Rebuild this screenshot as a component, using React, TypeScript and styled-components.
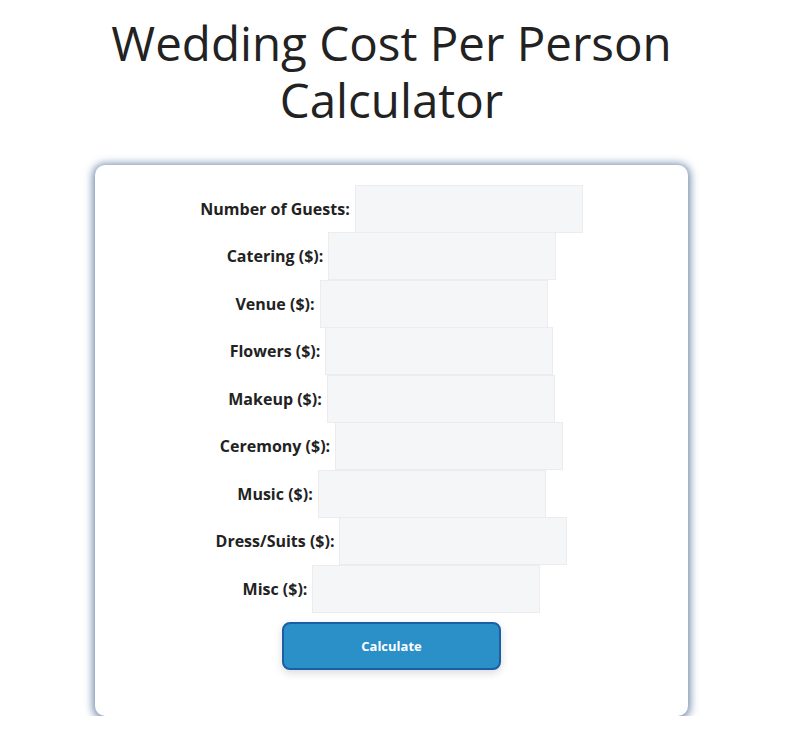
import React from "react";
import styled, { createGlobalStyle } from "styled-components";

const Global = createGlobalStyle`
  body {
    margin: 8px 16px 8px 8px;
    background: #ffffff;
    font-family: "Open Sans", "Noto Sans", sans-serif;
    color: #222222;
  }
`;

const Page = styled.div`
  display: flex;
  flex-direction: column;
  align-items: center;
`;

const Title = styled.h1`
  margin: 6px 0 0;
  width: 620px;
  text-align: center;
  font-family: "Open Sans", "Noto Sans", sans-serif;
  font-weight: 400;
  font-size: 47.5px;
  line-height: 57px;
  color: #222222;
`;

const Card = styled.form`
  margin-top: 37px;
  width: 593px;
  box-sizing: border-box;
  padding: 20px 0 46px;
  background: #ffffff;
  border-radius: 10px;
  box-shadow: 0 1px 9px 2px rgba(60, 95, 140, 0.75);
  display: flex;
  flex-direction: column;
  align-items: center;
`;

const Row = styled.div`
  display: flex;
  align-items: center;
  justify-content: center;
  height: 47.5px;
`;

const Label = styled.label`
  font-weight: 700;
  font-size: 16px;
  color: #222222;
  margin-right: 5px;
`;

const Input = styled.input`
  width: 228px;
  height: 48px;
  box-sizing: border-box;
  background: #f5f6f8;
  border: 1px solid #ececee;
  border-radius: 0;
  outline: none;
`;

const Button = styled.button`
  margin-top: 9px;
  width: 219px;
  height: 48px;
  background: #2b8fc8;
  color: #ffffff;
  border: 2px solid #1a5ea6;
  border-radius: 8px;
  font-family: "Open Sans", "Noto Sans", sans-serif;
  font-weight: 700;
  font-size: 13px;
  box-shadow: 0 3px 8px rgba(0, 0, 0, 0.15);
  cursor: pointer;
`;

const fields = [
  "Number of Guests:",
  "Catering ($):",
  "Venue ($):",
  "Flowers ($):",
  "Makeup ($):",
  "Ceremony ($):",
  "Music ($):",
  "Dress/Suits ($):",
  "Misc ($):",
];

export default function App() {
  return (
    <Page>
      <Global />
      <Title>Wedding Cost Per Person Calculator</Title>
      <Card onSubmit={(e) => e.preventDefault()}>
        {fields.map((f) => (
          <Row key={f}>
            <Label>{f}</Label>
            <Input type="number" />
          </Row>
        ))}
        <Button type="submit">Calculate</Button>
      </Card>
    </Page>
  );
}
